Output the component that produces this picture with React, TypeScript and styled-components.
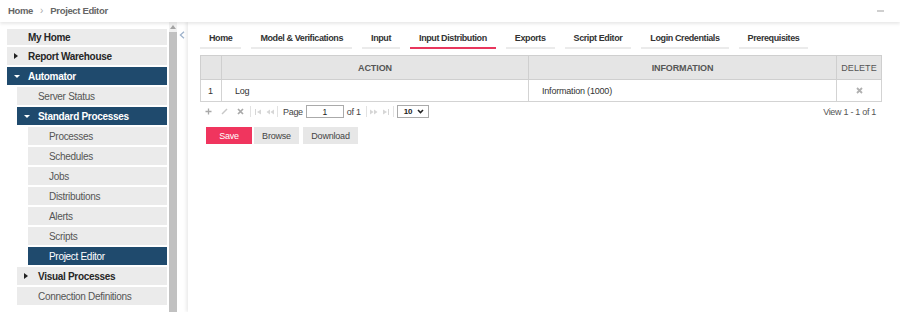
import styled, { createGlobalStyle } from 'styled-components'

const GlobalStyle = createGlobalStyle`
  * { box-sizing: border-box; }
  html, body { margin: 0; padding: 0; background: #fff; }
  body {
    font-family: "Liberation Sans", Arial, sans-serif;
    font-size: 9px;
    color: #333;
  }
`

type NavItem = {
  label: string
  level: number
  bold?: boolean
  arrow?: 'right' | 'down'
  active?: boolean
  short?: boolean
}

const navItems: NavItem[] = [
  { label: 'My Home', level: 0, bold: true, short: true },
  { label: 'Report Warehouse', level: 0, bold: true, arrow: 'right' },
  { label: 'Automator', level: 0, bold: true, arrow: 'down', active: true },
  { label: 'Server Status', level: 1 },
  { label: 'Standard Processes', level: 1, bold: true, arrow: 'down', active: true },
  { label: 'Processes', level: 2 },
  { label: 'Schedules', level: 2 },
  { label: 'Jobs', level: 2 },
  { label: 'Distributions', level: 2 },
  { label: 'Alerts', level: 2 },
  { label: 'Scripts', level: 2 },
  { label: 'Project Editor', level: 2, active: true },
  { label: 'Visual Processes', level: 1, bold: true, arrow: 'right' },
  { label: 'Connection Definitions', level: 1 },
]

const tabs = [
  'Home',
  'Model & Verifications',
  'Input',
  'Input Distribution',
  'Exports',
  'Script Editor',
  'Login Credentials',
  'Prerequisites',
]

const App = () => {
  return (
    <Page>
      <GlobalStyle />
      <TopBar>
        <Crumb>Home</Crumb>
        <CrumbSep>›</CrumbSep>
        <Crumb>Project Editor</Crumb>
        <Minimize />
      </TopBar>

      <Body>
        <Sidebar>
          <Nav>
            {navItems.map(item => (
              <NavRow
                key={item.label}
                $level={item.level}
                $active={!!item.active}
                $short={!!item.short}
              >
                <Lead>
                  {item.arrow === 'right' && <ArrowRight />}
                  {item.arrow === 'down' && <ArrowDown />}
                </Lead>
                <NavLabel $bold={!!item.bold} $active={!!item.active}>
                  {item.label}
                </NavLabel>
              </NavRow>
            ))}
          </Nav>
          <ScrollBar>
            <ScrollButton>
              <svg width="6" height="4" viewBox="0 0 6 4">
                <path d="M0 4 L3 0 L6 4 Z" fill="#a3a3a3" />
              </svg>
            </ScrollButton>
            <ScrollThumb />
          </ScrollBar>
        </Sidebar>

        <Collapse>
          <svg width="6" height="8" viewBox="0 0 6 8">
            <path d="M5 0.8 L1.4 4 L5 7.2" fill="none" stroke="#9fb3cc" strokeWidth="1.3" />
          </svg>
        </Collapse>

        <Main>
          <Tabs>
            {tabs.map(t => (
              <Tab key={t} $active={t === 'Input Distribution'}>
                {t}
              </Tab>
            ))}
          </Tabs>

          <Grid>
            <colgroup>
              <col style={{ width: 21 }} />
              <col style={{ width: 307 }} />
              <col style={{ width: 308 }} />
              <col style={{ width: 45 }} />
            </colgroup>
            <thead>
              <tr>
                <Th />
                <Th>ACTION</Th>
                <Th>INFORMATION</Th>
                <Th $light>DELETE</Th>
              </tr>
            </thead>
            <tbody>
              <tr>
                <Td $num>1</Td>
                <Td>Log</Td>
                <Td>Information (1000)</Td>
                <Td $center>
                  <svg width="7" height="7" viewBox="0 0 7 7">
                    <path d="M1 1 L6 6 M6 1 L1 6" stroke="#b0b0b0" strokeWidth="1.8" />
                  </svg>
                </Td>
              </tr>
            </tbody>
          </Grid>

          <Pager>
            <PagerIcon $w={16}>
              <svg width="7" height="7" viewBox="0 0 7 7">
                <path d="M3.5 0.5 V6.5 M0.5 3.5 H6.5" stroke="#a8a8a8" strokeWidth="1.3" />
              </svg>
            </PagerIcon>
            <PagerIcon $w={16}>
              <svg width="7" height="7" viewBox="0 0 7 7">
                <path d="M1 6 L6 1" stroke="#c8c8c8" strokeWidth="1.4" />
              </svg>
            </PagerIcon>
            <PagerIcon $w={16}>
              <svg width="7" height="7" viewBox="0 0 7 7">
                <path d="M1 1 L6 6 M6 1 L1 6" stroke="#a8a8a8" strokeWidth="1.7" />
              </svg>
            </PagerIcon>
            <PagerSep />
            <PagerIcon $w={11}>
              <svg width="7" height="6" viewBox="0 0 7 6">
                <path d="M0.5 0 V6" stroke="#d6d6d6" strokeWidth="1" />
                <path d="M6 0.5 L2 3 L6 5.5 Z" fill="#d6d6d6" />
              </svg>
            </PagerIcon>
            <PagerIcon $w={11}>
              <svg width="8" height="6" viewBox="0 0 8 6">
                <path d="M4 0.5 L0.5 3 L4 5.5 Z M8 0.5 L4.5 3 L8 5.5 Z" fill="#d6d6d6" />
              </svg>
            </PagerIcon>
            <PagerSep />
            <PagerText>Page</PagerText>
            <PageInput readOnly value="1" />
            <PagerText>of 1</PagerText>
            <PagerSep />
            <PagerIcon $w={11}>
              <svg width="8" height="6" viewBox="0 0 8 6">
                <path d="M0 0.5 L3.5 3 L0 5.5 Z M4 0.5 L7.5 3 L4 5.5 Z" fill="#d6d6d6" />
              </svg>
            </PagerIcon>
            <PagerIcon $w={11}>
              <svg width="7" height="6" viewBox="0 0 7 6">
                <path d="M1 0.5 L5 3 L1 5.5 Z" fill="#d6d6d6" />
                <path d="M6.5 0 V6" stroke="#d6d6d6" strokeWidth="1" />
              </svg>
            </PagerIcon>
            <PagerSep />
            <SizeSelect>
              <span>10</span>
              <svg width="7" height="5" viewBox="0 0 7 5">
                <path d="M1 1 L3.5 3.6 L6 1" fill="none" stroke="#222" strokeWidth="1.5" />
              </svg>
            </SizeSelect>
            <ViewInfo>View 1 - 1 of 1</ViewInfo>
          </Pager>

          <Actions>
            <Button $primary>Save</Button>
            <Button $w={45}>Browse</Button>
            <Button $w={55} $gap={4}>Download</Button>
          </Actions>
        </Main>
      </Body>
    </Page>
  )
}

export default App

const Page = styled.div`
  width: 900px;
  height: 312px;
  display: flex;
  flex-direction: column;
  overflow: hidden;
  background: #fff;
`

const TopBar = styled.div`
  position: relative;
  z-index: 2;
  height: 22px;
  flex-shrink: 0;
  display: flex;
  align-items: center;
  padding: 0 8px 1px 8px;
  background: #fff;
  box-shadow: 0 2px 3px rgba(0, 0, 0, 0.09);
`

const Crumb = styled.span`
  font-size: 9.5px;
  font-weight: bold;
  color: #666;
  letter-spacing: -0.35px;
`

const CrumbSep = styled.span`
  color: #aaa;
  font-size: 10px;
  margin: 0 7px 0 7px;
`

const Minimize = styled.span`
  margin-left: auto;
  margin-right: 8px;
  width: 7px;
  height: 2px;
  background: #cfcfcf;
`

const Body = styled.div`
  flex: 1;
  display: flex;
  min-height: 0;
`

const Sidebar = styled.div`
  width: 177px;
  flex-shrink: 0;
  display: flex;
`

const Nav = styled.div`
  width: 169px;
  padding: 7px 2px 0 0;
  display: flex;
  flex-direction: column;
  gap: 2px;
`

const NavRow = styled.div<{ $level: number; $active: boolean; $short: boolean }>`
  height: ${p => (p.$short ? 16 : 18)}px;
  flex-shrink: 0;
  margin-left: ${p => [7, 17, 28][p.$level]}px;
  display: flex;
  align-items: center;
  background: ${p => (p.$active ? '#1f4a6d' : '#ebebeb')};
`

const Lead = styled.span`
  width: 21px;
  flex-shrink: 0;
  display: flex;
  align-items: center;
  padding-left: 7px;
`

const ArrowRight = styled.span`
  width: 0;
  height: 0;
  border-left: 4px solid #222;
  border-top: 3px solid transparent;
  border-bottom: 3px solid transparent;
`

const ArrowDown = styled.span`
  width: 0;
  height: 0;
  border-top: 3px solid #fff;
  border-left: 3px solid transparent;
  border-right: 3px solid transparent;
`

const NavLabel = styled.span<{ $bold: boolean; $active: boolean }>`
  font-size: 10px;
  letter-spacing: -0.3px;
  font-weight: ${p => (p.$bold ? 'bold' : 'normal')};
  color: ${p => (p.$active ? '#fff' : p.$bold ? '#262626' : '#555')};
  white-space: nowrap;
`

const ScrollBar = styled.div`
  width: 8px;
  display: flex;
  flex-direction: column;
  background: #f1f1f1;
`

const ScrollButton = styled.div`
  height: 10px;
  display: flex;
  justify-content: center;
  align-items: center;
  padding-bottom: 1px;
`

const ScrollThumb = styled.div`
  flex: 1;
  background: #c1c1c1;
`

const Collapse = styled.div`
  width: 11px;
  flex-shrink: 0;
  display: flex;
  justify-content: center;
  padding-top: 9px;
  padding-right: 1px;
`

const Main = styled.div`
  flex: 1;
  min-width: 0;
  padding: 6px 19px 0 12px;
  background: #fff;
  box-shadow: -2px 0 3px rgba(0, 0, 0, 0.08);
`

const Tabs = styled.div`
  display: flex;
  gap: 10px;
`

const Tab = styled.div<{ $active: boolean }>`
  padding: 4px 9px 3px 9px;
  line-height: 12px;
  font-size: 9px;
  font-weight: bold;
  letter-spacing: -0.4px;
  color: #333;
  white-space: nowrap;
  border-bottom: 2px solid ${p => (p.$active ? '#e8365d' : '#ebebeb')};
`

const Grid = styled.table`
  margin-top: 6px;
  width: 681px;
  border-collapse: collapse;
  table-layout: fixed;
`

const Th = styled.th<{ $light?: boolean }>`
  height: 24px;
  padding: 0;
  background: #e5e5e5;
  border: 1px solid #cfcfcf;
  font-size: 9px;
  font-weight: ${p => (p.$light ? 'normal' : 'bold')};
  letter-spacing: ${p => (p.$light ? '0.1px' : '-0.1px')};
  color: #555;
  text-align: center;
`

const Td = styled.td<{ $num?: boolean; $center?: boolean }>`
  height: 22px;
  padding: 0 ${p => (p.$num ? 0 : 13)}px 0 ${p => (p.$num ? 7 : 13)}px;
  border: 1px solid #d3d3d3;
  font-size: 9px;
  letter-spacing: -0.2px;
  color: #333;
  text-align: ${p => (p.$center ? 'center' : 'left')};
  vertical-align: middle;
  svg { display: block; margin: 0 auto; }
`

const Pager = styled.div`
  height: 19px;
  display: flex;
  align-items: center;
`

const PagerIcon = styled.span<{ $w: number }>`
  width: ${p => p.$w}px;
  display: flex;
  justify-content: center;
  align-items: center;
`

const PagerSep = styled.span`
  width: 1px;
  height: 11px;
  margin: 0 2px 0 2px;
  background: #e2e2e2;
`

const PagerText = styled.span`
  margin: 0 3px 0 3px;
  font-size: 9px;
  letter-spacing: -0.3px;
  color: #444;
`

const PageInput = styled.input`
  width: 38px;
  height: 13px;
  padding: 0;
  border: 1px solid #aaa;
  font-family: inherit;
  font-size: 8.5px;
  text-align: center;
  color: #222;
  outline: none;
`

const SizeSelect = styled.span`
  width: 32px;
  height: 13px;
  margin-left: 1px;
  display: flex;
  align-items: center;
  justify-content: space-between;
  padding: 0 4px 0 6px;
  border: 1px solid #aaa;
  font-size: 8px;
  font-weight: bold;
  color: #222;
`

const ViewInfo = styled.span`
  margin-left: auto;
  margin-right: 5px;
  font-size: 9px;
  letter-spacing: -0.3px;
  color: #555;
`

const Actions = styled.div`
  display: flex;
  margin-top: 6px;
  padding-left: 6px;
`

const Button = styled.div<{ $primary?: boolean; $w?: number; $gap?: number }>`
  width: ${p => p.$w ?? 46}px;
  height: 17px;
  margin-left: ${p => (p.$primary ? 0 : p.$gap ?? 2)}px;
  display: flex;
  align-items: center;
  justify-content: center;
  font-size: 9px;
  letter-spacing: -0.2px;
  background: ${p => (p.$primary ? '#f0355e' : '#e7e7e7')};
  color: ${p => (p.$primary ? '#fff' : '#444')};
`
